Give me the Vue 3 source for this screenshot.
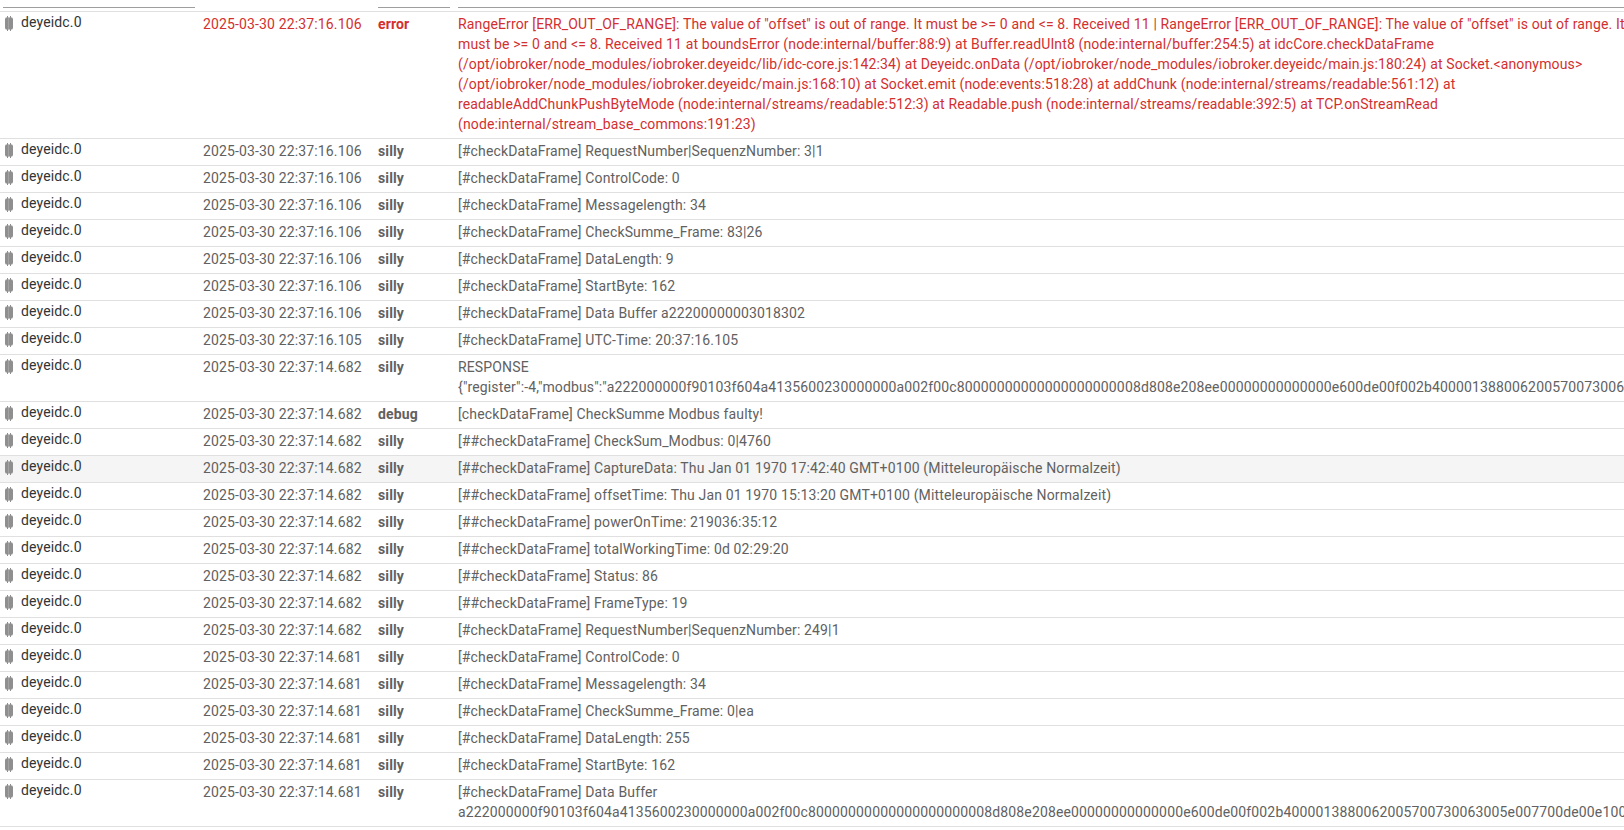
<script setup>
const longData = 'a222000000f90103f604a4135600230000000a002f00c80000000000000000000008d808e208ee00000000000000e600de00f002b4000013880062005700730063005e007700de00e10000000000'

const errorText = 'RangeError [ERR_OUT_OF_RANGE]: The value of "offset" is out of range. It must be >= 0 and <= 8. Received 11 | RangeError [ERR_OUT_OF_RANGE]: The value of "offset" is out of range. It must be >= 0 and <= 8. Received 11 at boundsError (node:internal/buffer:88:9) at Buffer.readUInt8 (node:internal/buffer:254:5) at idcCore.checkDataFrame (/opt/iobroker/node_modules/iobroker.deyeidc/lib/idc-core.js:142:34) at Deyeidc.onData (/opt/iobroker/node_modules/iobroker.deyeidc/main.js:180:24) at Socket.<anonymous> (/opt/iobroker/node_modules/iobroker.deyeidc/main.js:168:10) at Socket.emit (node:events:518:28) at addChunk (node:internal/streams/readable:561:12) at readableAddChunkPushByteMode (node:internal/streams/readable:512:3) at Readable.push (node:internal/streams/readable:392:5) at TCP.onStreamRead (node:internal/stream_base_commons:191:23)'

const rows = [
  { time: '22:37:16.106', level: 'error', msg: errorText },
  { time: '22:37:16.106', level: 'silly', msg: '[#checkDataFrame] RequestNumber|SequenzNumber: 3|1' },
  { time: '22:37:16.106', level: 'silly', msg: '[#checkDataFrame] ControlCode: 0' },
  { time: '22:37:16.106', level: 'silly', msg: '[#checkDataFrame] Messagelength: 34' },
  { time: '22:37:16.106', level: 'silly', msg: '[#checkDataFrame] CheckSumme_Frame: 83|26' },
  { time: '22:37:16.106', level: 'silly', msg: '[#checkDataFrame] DataLength: 9' },
  { time: '22:37:16.106', level: 'silly', msg: '[#checkDataFrame] StartByte: 162' },
  { time: '22:37:16.106', level: 'silly', msg: '[#checkDataFrame] Data Buffer a22200000003018302' },
  { time: '22:37:16.105', level: 'silly', msg: '[#checkDataFrame] UTC-Time: 20:37:16.105' },
  { time: '22:37:14.682', level: 'silly', msg: 'RESPONSE {"register":-4,"modbus":"' + longData + '"}' },
  { time: '22:37:14.682', level: 'debug', msg: '[checkDataFrame] CheckSumme Modbus faulty!' },
  { time: '22:37:14.682', level: 'silly', msg: '[##checkDataFrame] CheckSum_Modbus: 0|4760' },
  { time: '22:37:14.682', level: 'silly', hover: true, msg: '[##checkDataFrame] CaptureData: Thu Jan 01 1970 17:42:40 GMT+0100 (Mitteleuropäische Normalzeit)' },
  { time: '22:37:14.682', level: 'silly', msg: '[##checkDataFrame] offsetTime: Thu Jan 01 1970 15:13:20 GMT+0100 (Mitteleuropäische Normalzeit)' },
  { time: '22:37:14.682', level: 'silly', msg: '[##checkDataFrame] powerOnTime: 219036:35:12' },
  { time: '22:37:14.682', level: 'silly', msg: '[##checkDataFrame] totalWorkingTime: 0d 02:29:20' },
  { time: '22:37:14.682', level: 'silly', msg: '[##checkDataFrame] Status: 86' },
  { time: '22:37:14.682', level: 'silly', msg: '[##checkDataFrame] FrameType: 19' },
  { time: '22:37:14.682', level: 'silly', msg: '[#checkDataFrame] RequestNumber|SequenzNumber: 249|1' },
  { time: '22:37:14.681', level: 'silly', msg: '[#checkDataFrame] ControlCode: 0' },
  { time: '22:37:14.681', level: 'silly', msg: '[#checkDataFrame] Messagelength: 34' },
  { time: '22:37:14.681', level: 'silly', msg: '[#checkDataFrame] CheckSumme_Frame: 0|ea' },
  { time: '22:37:14.681', level: 'silly', msg: '[#checkDataFrame] DataLength: 255' },
  { time: '22:37:14.681', level: 'silly', msg: '[#checkDataFrame] StartByte: 162' },
  { time: '22:37:14.681', level: 'silly', msg: '[#checkDataFrame] Data Buffer ' + longData }
]
</script>

<template>
  <div class="log-page">
    <table class="log-table">
      <colgroup>
        <col class="col-adapter" />
        <col class="col-date" />
        <col class="col-level" />
        <col class="col-msg" />
      </colgroup>
      <thead>
        <tr>
          <th><div class="head-line first"></div></th>
          <th></th>
          <th><div class="head-line"></div></th>
          <th><div class="head-line"></div></th>
        </tr>
      </thead>
      <tbody>
        <tr v-for="(row, index) in rows" :key="index" :class="{ hover: row.hover, 'is-error': row.level === 'error' }">
          <td class="adapter">
            <div class="adapter-inner">
              <svg class="adapter-icon" width="8" height="15" viewBox="0 0 8 15">
                <path d="M2 0h1v1.5h2V0h1v1.5h1.2L8 3v9l-.8 1.5H6V15H5v-1.5H3V15H2v-1.5H.8L0 12V3l.8-1.5H2z" fill="#8f8f8f" />
                <path d="M3 1.5h.6v12H3z" fill="#b0b0b0" />
              </svg>
              <span>deyeidc.0</span>
            </div>
          </td>
          <td class="date">2025-03-30 {{ row.time }}</td>
          <td class="level">{{ row.level }}</td>
          <td class="msg">{{ row.msg }}</td>
        </tr>
      </tbody>
    </table>
  </div>
</template>

<style scoped>
.log-page {
  width: 1624px;
  height: 830px;
  overflow: hidden;
  background: #fff;
  font-family: Roboto, "Liberation Sans", sans-serif;
  font-size: 14px;
  line-height: 20px;
  letter-spacing: 0.14px;
  color: #616161;
}

.log-table {
  width: 1652px;
  table-layout: fixed;
  border-collapse: collapse;
}

.col-adapter { width: 199px; }
.col-date { width: 175px; }
.col-level { width: 80px; }

th {
  height: 11px;
  padding: 0 4px;
  vertical-align: top;
  border-bottom: 1px solid #e0e0e0;
}

.head-line {
  height: 1px;
  margin-top: 7px;
  background: #9e9e9e;
}

.head-line.first {
  margin-left: -1px;
}

td {
  padding: 2px 4px 4px;
  vertical-align: top;
  border-bottom: 1px solid #e0e0e0;
}

.hover td {
  background: #f5f5f5;
}

.adapter {
  color: #333;
  padding-top: 0;
  padding-left: 5px;
  padding-bottom: 4px;
}

.adapter-inner {
  display: flex;
  align-items: flex-start;
  gap: 8px;
}

.adapter-icon {
  margin-top: 4px;
  flex-shrink: 0;
}

.level {
  font-weight: 700;
}

.is-error .date,
.is-error .level,
.is-error .msg {
  color: #d32f2f;
}
</style>

<style>
html, body {
  margin: 0;
  overflow: hidden;
}
</style>
